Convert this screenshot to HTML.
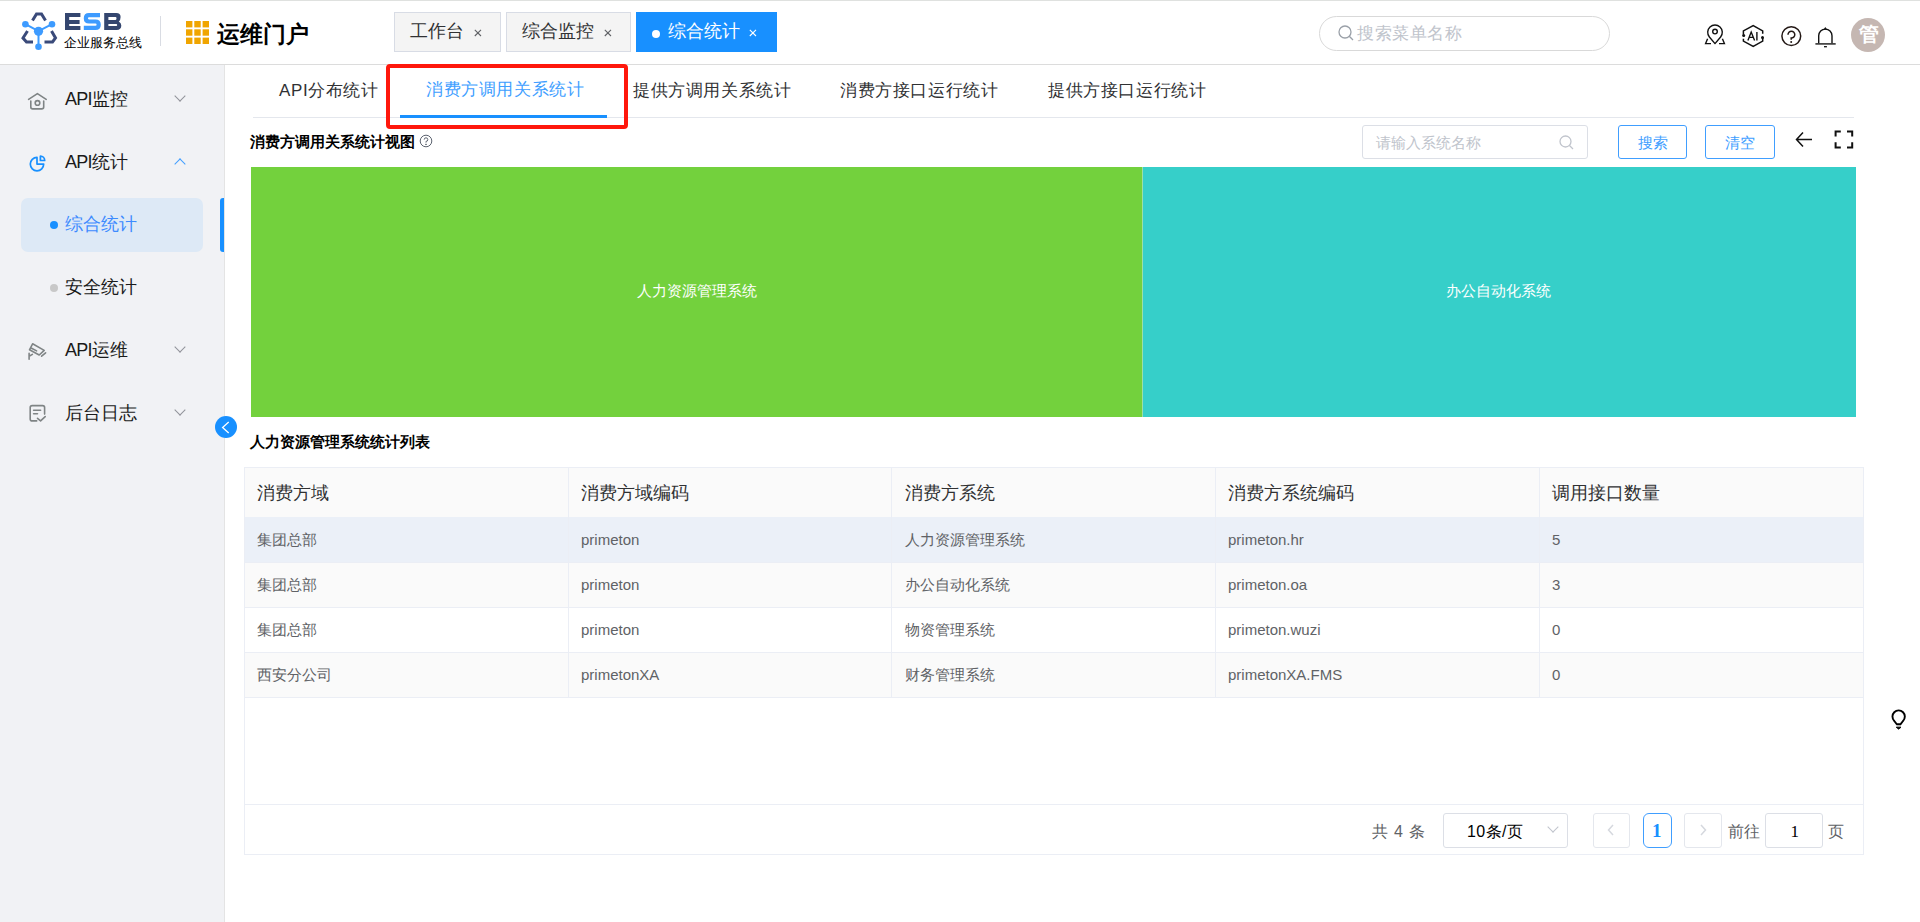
<!DOCTYPE html>
<html><head><meta charset="utf-8">
<style>
*{margin:0;padding:0;box-sizing:border-box}
html,body{width:1920px;height:922px;overflow:hidden;background:#fff;font-family:"Liberation Sans",sans-serif;color:#303133}
.a{position:absolute}
.t{position:absolute;white-space:nowrap;line-height:1}
#topline{left:0;top:0;width:1920px;height:1px;background:#dfe1df}
#hdr-b{left:0;top:64px;width:1920px;height:1px;background:#dcdcdc}
#side{left:0;top:65px;width:224px;height:857px;background:#f1f2f5}
#side-b{left:224px;top:65px;width:1px;height:857px;background:#e4e4e4}
.tab{position:absolute;top:12px;height:40px;background:#f4f4f4;border:1px solid #d8dce5;font-size:18px;color:#303133}
.tabx{position:absolute;font-size:12px;color:#606266}
.menu{font-size:18px;color:#1a1a1a}
.chev{position:absolute;width:8px;height:8px;border-right:1px solid #909399;border-bottom:1px solid #909399}
.ctab{font-size:17px;letter-spacing:0.6px;color:#303133}
.th{position:absolute;font-size:18px;color:#303133;line-height:1}
.td{position:absolute;font-size:15px;color:#606266;line-height:1}
</style></head>
<body>
<div id="topline" class="a"></div>
<div id="hdr-b" class="a"></div>
<div id="side" class="a"></div>
<div id="side-b" class="a"></div>

<!-- logo -->
<svg class="a" style="left:0;top:0" width="60" height="60" viewBox="0 0 60 60">
  <path d="M32.5 20.5 L36.5 14 L41.5 14 L45.5 20.5" fill="none" stroke="#3a4a7a" stroke-width="3"/>
  <path d="M27.5 31 L23 38 L26.5 42 L33 42" fill="none" stroke="#3a4a7a" stroke-width="3"/>
  <path d="M51.5 31 L55.5 38 L52.5 42 L44.5 42" fill="none" stroke="#3a4a7a" stroke-width="3"/>
  <path d="M25.4 24.2 L38.5 31.2 L52 24.2 M38.5 31.2 L38.5 46.5" fill="none" stroke="#3d9bff" stroke-width="2"/>
  <circle cx="38.5" cy="31.3" r="4.6" fill="#3d9bff"/>
  <circle cx="25.4" cy="24.2" r="3.3" fill="#3d9bff"/>
  <circle cx="52" cy="24.2" r="3.3" fill="#3d9bff"/>
  <circle cx="38.5" cy="46.7" r="3.3" fill="#3d9bff"/>
</svg>
<svg class="a" style="left:0;top:0" width="130" height="34" viewBox="0 0 130 34">
  <path fill="#34466f" d="M65 13 H80.4 V17.1 H69.2 V20 H79.6 V24 H69.2 V25.9 H80.4 V30 H65 Z"/>
  <path fill="none" stroke="#3d9bff" stroke-width="4.2" d="M100 15.1 L89 15.1 Q85.85 15.1 85.85 18.3 Q85.85 21.5 89 21.5 L95.5 21.5 Q98.7 21.5 98.7 24.7 Q98.7 27.9 95.5 27.9 L83.8 27.9"/>
  <path fill="#34466f" fill-rule="evenodd" d="M104.2 13 H116.3 Q120.6 13 120.6 17 Q120.6 20.2 118.8 21.4 Q121.3 22.6 121.3 25.6 Q121.3 30 116.6 30 H104.2 Z M108.4 17.1 V20 H115.6 Q116.5 20 116.5 18.55 Q116.5 17.1 115.6 17.1 Z M108.4 24 V25.9 H116.3 Q117.2 25.9 117.2 24.95 Q117.2 24 116.3 24 Z"/>
</svg>
<div class="t" style="left:64px;top:35.5px;font-size:13px;color:#000;letter-spacing:0px">企业服务总线</div>
<div class="a" style="left:160px;top:16px;width:1px;height:30px;background:#d9dce3"></div>
<!-- grid icon -->
<svg class="a" style="left:186px;top:21px" width="23" height="23" viewBox="0 0 23 23" fill="#f0a500">
  <rect x="0" y="0" width="6.4" height="6.4"/><rect x="8.3" y="0" width="6.4" height="6.4"/><rect x="16.6" y="0" width="6.4" height="6.4"/>
  <rect x="0" y="8.3" width="6.4" height="6.4"/><rect x="8.3" y="8.3" width="6.4" height="6.4"/><rect x="16.6" y="8.3" width="6.4" height="6.4"/>
  <rect x="0" y="16.6" width="6.4" height="6.4"/><rect x="8.3" y="16.6" width="6.4" height="6.4"/><rect x="16.6" y="16.6" width="6.4" height="6.4"/>
</svg>
<div class="t" style="left:217px;top:23px;font-size:23px;font-weight:bold;color:#000">运维门户</div>

<!-- header tabs -->
<div class="tab" style="left:394px;width:107px"><span class="t" style="left:15px;top:9px">工作台</span><svg class="a" style="left:79px;top:16px" width="8" height="8" viewBox="0 0 8 8" stroke="#606266" stroke-width="1.1"><path d="M0.8 0.8 L7 7 M7 0.8 L0.8 7"/></svg></div>
<div class="tab" style="left:506px;width:125px"><span class="t" style="left:15px;top:9px">综合监控</span><svg class="a" style="left:97px;top:16px" width="8" height="8" viewBox="0 0 8 8" stroke="#606266" stroke-width="1.1"><path d="M0.8 0.8 L7 7 M7 0.8 L0.8 7"/></svg></div>
<div class="tab" style="left:636px;width:141px;background:#1890ff;border-color:#1890ff;color:#fff"><span class="a" style="left:15px;top:17px;width:8px;height:8px;border-radius:50%;background:#fff"></span><span class="t" style="left:31px;top:9px">综合统计</span><svg class="a" style="left:112px;top:16px" width="8" height="8" viewBox="0 0 8 8" stroke="#fff" stroke-width="1.1"><path d="M0.8 0.8 L7 7 M7 0.8 L0.8 7"/></svg></div>

<!-- search -->
<div class="a" style="left:1319px;top:16px;width:291px;height:35px;border:1px solid #d9d9d9;border-radius:18px"></div>
<svg class="a" style="left:1338px;top:25px" width="16" height="16" viewBox="0 0 16 16"><circle cx="7" cy="7" r="6" fill="none" stroke="#9aa0a8" stroke-width="1.3"/><path d="M11.3 11.3 L15 15" stroke="#9aa0a8" stroke-width="1.3"/></svg>
<div class="t" style="left:1357px;top:25px;font-size:17px;letter-spacing:0.6px;color:#c0c4cc">搜索菜单名称</div>

<!-- header icons -->
<svg class="a" style="left:1700px;top:20px" width="30" height="30" viewBox="0 0 30 30" fill="none" stroke="#111" stroke-width="1.4">
  <path d="M15 23.6 L9.39 16.97 A7.3 7.3 0 1 1 20.61 16.97 Z" stroke-linejoin="round"/>
  <circle cx="15" cy="11.6" r="2.3"/>
  <path d="M7.6 18.8 L5.6 23.6 L11 23.6 M22.4 18.8 L24.4 23.6 L19 23.6"/>
</svg>
<svg class="a" style="left:1740px;top:22px" width="30" height="30" viewBox="0 0 30 30" fill="none" stroke="#111" stroke-width="1.5">
  <path d="M3.4 12.8 L3.4 8.9 L13.2 3.5 L22.7 8.9 L22.7 11.8"/>
  <path d="M3.4 16.8 L3.4 19.1 L13.2 24.3 L22.7 19.1 L22.7 15.8"/>
  <circle cx="3.7" cy="13.4" r="1.5" fill="#111" stroke="none"/>
  <circle cx="22.5" cy="15.6" r="1.5" fill="#111" stroke="none"/>
  <path d="M7.9 18.6 L11.2 10.1 L14.6 18.6 M9.3 15.4 L13.2 15.4 M16.9 10.1 L16.9 18.6" stroke-width="1.4"/>
</svg>
<svg class="a" style="left:1776px;top:21px" width="30" height="30" viewBox="0 0 30 30" fill="none" stroke="#231815" stroke-width="1.5">
  <circle cx="15.3" cy="15.1" r="9.4"/>
  <path d="M12 13.7 A3.4 3.4 0 1 1 15.2 17 L15.2 18.8"/>
  <circle cx="15.2" cy="21" r="1" fill="#231815" stroke="none"/>
</svg>
<svg class="a" style="left:1810px;top:21px" width="30" height="30" viewBox="0 0 30 30" fill="none" stroke="#111" stroke-width="1.4">
  <path d="M8.7 22.6 L8.7 14.75 A6.65 6.65 0 0 1 22 14.75 L22 22.6"/>
  <path d="M5.4 22.9 L25.7 22.9" stroke="#333" stroke-width="1.6"/>
  <path d="M14.2 8.3 L15.35 6.4 L16.5 8.3 Z" fill="#111" stroke-width="0.6"/>
  <path d="M14 25.7 L16.9 25.7" stroke-width="1.3"/>
</svg>
<div class="a" style="left:1851px;top:18px;width:34px;height:34px;border-radius:50%;background:#c5b7b2"></div>
<div class="t" style="left:1858.5px;top:24px;font-size:20px;font-weight:bold;color:#fff">管</div>

<!-- sidebar menu -->
<svg class="a" style="left:24px;top:88px" width="28" height="26" viewBox="0 0 28 26" fill="none" stroke="#7f8485" stroke-width="1.6" stroke-linecap="round" stroke-linejoin="round">
  <path d="M4.6 11.4 L13.4 5.6 L22.2 11.4"/><path d="M6.8 13 L6.8 19 Q6.8 20.9 8.7 20.9 L17.8 20.9 Q19.7 20.9 19.7 19 L19.7 13"/><circle cx="13.5" cy="14.9" r="2.3"/>
</svg>
<div class="t menu" style="left:65px;top:90px"><span style="letter-spacing:-0.7px">API</span>监控</div>
<div class="chev" style="left:176px;top:92px;transform:rotate(45deg)"></div>

<svg class="a" style="left:24px;top:150px" width="28" height="26" viewBox="0 0 28 26" fill="none" stroke="#1890ff" stroke-width="1.7" stroke-linejoin="round">
  <path d="M13 7.4 L13 14.1 L19.7 14.1 A6.7 6.7 0 1 1 13 7.4 Z"/><path d="M16.4 10.5 L16.4 6.2 A4.3 4.3 0 0 1 20.7 10.5 Z"/>
</svg>
<div class="t menu" style="left:65px;top:153px"><span style="letter-spacing:-0.7px">API</span>统计</div>
<div class="chev" style="left:176px;top:160px;transform:rotate(-135deg);border-color:#409eff"></div>

<div class="a" style="left:21px;top:198px;width:182px;height:54px;border-radius:7px;background:#dde9f6"></div>
<div class="a" style="left:50px;top:221px;width:8px;height:8px;border-radius:50%;background:#1890ff"></div>
<div class="t menu" style="left:65px;top:215px;color:#3d8bff">综合统计</div>
<div class="a" style="left:220px;top:198px;width:4px;height:54px;border-radius:3px 0 0 3px;background:#1890ff"></div>

<div class="a" style="left:50px;top:284px;width:8px;height:8px;border-radius:50%;background:#c8c8c8"></div>
<div class="t menu" style="left:65px;top:278px">安全统计</div>

<svg class="a" style="left:24px;top:338px" width="28" height="26" viewBox="0 0 28 26" fill="none" stroke="#7f8485" stroke-width="1.6" stroke-linejoin="round" stroke-linecap="round">
  <path d="M8.6 5.8 L20.2 12.4 L15.2 17 L5.5 11.8 Z"/><path d="M7.6 10.2 L12.6 12.9"/><path d="M17.6 18.2 L21.6 14.8"/><path d="M5.1 15.3 L5.1 21.3 M5.1 18.3 L8.4 16.4"/>
</svg>
<div class="t menu" style="left:65px;top:341px"><span style="letter-spacing:-0.7px">API</span>运维</div>
<div class="chev" style="left:176px;top:343px;transform:rotate(45deg)"></div>

<svg class="a" style="left:24px;top:400px" width="28" height="26" viewBox="0 0 28 26" fill="none" stroke="#7f8485" stroke-width="1.6" stroke-linejoin="round" stroke-linecap="round">
  <path d="M12.7 20.9 L8.2 20.9 Q6.2 20.9 6.2 18.9 L6.2 7.6 Q6.2 5.6 8.2 5.6 L18.6 5.6 Q20.6 5.6 20.6 7.6 L20.6 14.1"/><path d="M9.6 10.2 L16.6 10.2 M9.6 13.8 L13.5 13.8"/><path d="M13.5 18.3 L16.6 20.9 L21.2 16.6"/>
</svg>
<div class="t menu" style="left:65px;top:404px">后台日志</div>
<div class="chev" style="left:176px;top:406px;transform:rotate(45deg)"></div>

<div class="a" style="left:214.8px;top:415.6px;width:22.6px;height:22.6px;border-radius:50%;background:#1890ff"></div>
<svg class="a" style="left:215px;top:416px" width="23" height="23" viewBox="0 0 23 23" fill="none" stroke="#fff" stroke-width="1.3"><path d="M13.7 6.1 L7.6 11.4 L13.7 16.9"/></svg>

<!-- content tabs -->
<div class="t ctab" style="left:279px;top:82px">API分布统计</div>
<div class="t ctab" style="left:426px;top:81px;color:#409eff">消费方调用关系统计</div>
<div class="t ctab" style="left:633px;top:82px">提供方调用关系统计</div>
<div class="t ctab" style="left:840px;top:82px">消费方接口运行统计</div>
<div class="t ctab" style="left:1048px;top:82px">提供方接口运行统计</div>
<div class="a" style="left:253px;top:117px;width:1601px;height:1px;background:#e4e7ed"></div>
<div class="a" style="left:400px;top:115px;width:207px;height:3px;background:#1890ff"></div>
<div class="a" style="left:386px;top:64px;width:242px;height:65px;border:4px solid #ff170c;border-radius:4px"></div>

<div class="t" style="left:250px;top:134px;font-size:15px;font-weight:bold;color:#000">消费方调用关系统计视图</div>
<svg class="a" style="left:419px;top:133.5px" width="14" height="14" viewBox="0 0 14 14" fill="none" stroke="#5c6370" stroke-width="1"><circle cx="7" cy="7" r="5.8"/><path d="M5.2 5.6 A1.8 1.8 0 1 1 7 7.4 L7 8.6"/><circle cx="7" cy="10.3" r="0.4" fill="#606266"/></svg>

<!-- filter -->
<div class="a" style="left:1362px;top:125px;width:226px;height:34px;border:1px solid #dcdfe6;border-radius:3px"></div>
<div class="t" style="left:1376px;top:135px;font-size:15px;color:#c0c4cc">请输入系统名称</div>
<svg class="a" style="left:1559px;top:135px" width="15" height="15" viewBox="0 0 15 15" fill="none" stroke="#c0c4cc" stroke-width="1.3"><circle cx="6.5" cy="6.5" r="5.5"/><path d="M10.5 10.5 L14 14"/></svg>
<div class="a" style="left:1618px;top:125px;width:69px;height:34px;border:1px solid #409eff;border-radius:3px"></div>
<div class="t" style="left:1638px;top:135px;font-size:15px;color:#409eff">搜索</div>
<div class="a" style="left:1705px;top:125px;width:70px;height:34px;border:1px solid #409eff;border-radius:3px"></div>
<div class="t" style="left:1725px;top:135px;font-size:15px;color:#409eff">清空</div>
<svg class="a" style="left:1794px;top:130px" width="20" height="20" viewBox="0 0 20 20" fill="none" stroke="#111" stroke-width="1.5"><path d="M9 2.5 L2.5 9.5 L9 16.5 M2.5 9.5 L18 9.5"/></svg>
<svg class="a" style="left:1834px;top:130px" width="20" height="20" viewBox="0 0 20 20" fill="none" stroke="#111" stroke-width="2"><path d="M1.6 6.6 L1.6 1.6 L6.8 1.6 M13 1.6 L18.2 1.6 L18.2 6.6 M18.2 12.2 L18.2 17.4 L13 17.4 M6.8 17.4 L1.6 17.4 L1.6 12.2"/></svg>

<!-- treemap -->
<div class="a" style="left:251px;top:167px;width:891px;height:250px;background:#73d13d"></div><div class="a" style="left:1142px;top:167px;width:1px;height:250px;background:#9be0a6"></div>
<div class="a" style="left:1143px;top:167px;width:713px;height:250px;background:#36cfc9"></div>
<div class="t" style="left:637px;top:283px;font-size:15px;color:#fff">人力资源管理系统</div>
<div class="t" style="left:1446px;top:283px;font-size:15px;color:#fff">办公自动化系统</div>

<div class="t" style="left:250px;top:434px;font-size:15px;font-weight:bold;color:#000">人力资源管理系统统计列表</div>

<!-- table -->
<div class="a" style="left:244px;top:467px;width:1620px;height:388px;border:1px solid #ebeef5"></div>
<div class="a" style="left:245px;top:468px;width:1618px;height:49px;background:#fafafa"></div>
<div class="a" style="left:245px;top:517px;width:1618px;height:45px;background:#ebf0f8"></div>
<div class="a" style="left:245px;top:562px;width:1618px;height:45px;background:#fafafa"></div>
<div class="a" style="left:245px;top:652px;width:1618px;height:45px;background:#fafafa"></div>
<div class="a" style="left:245px;top:562px;width:1618px;height:1px;background:#ebeef5"></div>
<div class="a" style="left:245px;top:607px;width:1618px;height:1px;background:#ebeef5"></div>
<div class="a" style="left:245px;top:652px;width:1618px;height:1px;background:#ebeef5"></div>
<div class="a" style="left:245px;top:697px;width:1618px;height:1px;background:#ebeef5"></div>
<div class="a" style="left:245px;top:804px;width:1618px;height:1px;background:#ebeef5"></div>
<div class="a" style="left:568px;top:468px;width:1px;height:229px;background:#ebeef5"></div>
<div class="a" style="left:891px;top:468px;width:1px;height:229px;background:#ebeef5"></div>
<div class="a" style="left:1215px;top:468px;width:1px;height:229px;background:#ebeef5"></div>
<div class="a" style="left:1539px;top:468px;width:1px;height:229px;background:#ebeef5"></div>

<div class="th" style="left:257px;top:484px">消费方域</div>
<div class="th" style="left:581px;top:484px">消费方域编码</div>
<div class="th" style="left:905px;top:484px">消费方系统</div>
<div class="th" style="left:1228px;top:484px">消费方系统编码</div>
<div class="th" style="left:1552px;top:484px">调用接口数量</div>

<div class="td" style="left:257px;top:532px">集团总部</div>
<div class="td" style="left:581px;top:532px">primeton</div>
<div class="td" style="left:905px;top:532px">人力资源管理系统</div>
<div class="td" style="left:1228px;top:532px">primeton.hr</div>
<div class="td" style="left:1552px;top:532px">5</div>

<div class="td" style="left:257px;top:577px">集团总部</div>
<div class="td" style="left:581px;top:577px">primeton</div>
<div class="td" style="left:905px;top:577px">办公自动化系统</div>
<div class="td" style="left:1228px;top:577px">primeton.oa</div>
<div class="td" style="left:1552px;top:577px">3</div>

<div class="td" style="left:257px;top:622px">集团总部</div>
<div class="td" style="left:581px;top:622px">primeton</div>
<div class="td" style="left:905px;top:622px">物资管理系统</div>
<div class="td" style="left:1228px;top:622px">primeton.wuzi</div>
<div class="td" style="left:1552px;top:622px">0</div>

<div class="td" style="left:257px;top:667px">西安分公司</div>
<div class="td" style="left:581px;top:667px">primetonXA</div>
<div class="td" style="left:905px;top:667px">财务管理系统</div>
<div class="td" style="left:1228px;top:667px">primetonXA.FMS</div>
<div class="td" style="left:1552px;top:667px">0</div>

<!-- pagination -->
<div class="t" style="left:1372px;top:824px;font-size:16px;color:#606266;word-spacing:1.5px">共 4 条</div>
<div class="a" style="left:1443px;top:813px;width:125px;height:35px;border:1px solid #dcdfe6;border-radius:3px"></div>
<div class="t" style="left:1467px;top:824px;font-size:16px;color:#000;letter-spacing:0.4px">10条/页</div>
<div class="chev" style="left:1549px;top:823px;transform:rotate(45deg);border-color:#c0c4cc"></div>
<div class="a" style="left:1593px;top:813px;width:37px;height:35px;border:1px solid #e4e7ed;border-radius:3px"></div>
<svg class="a" style="left:1604px;top:823px" width="14" height="14" viewBox="0 0 14 14" fill="none" stroke="#d5d8de" stroke-width="1.5"><path d="M9 2 L4.5 7 L9 12"/></svg>
<div class="a" style="left:1643px;top:813px;width:29px;height:35px;border:1px solid #409eff;border-radius:6px"></div>
<div class="t" style="left:1652px;top:821px;font-size:19px;font-weight:bold;color:#1890ff;font-family:'Liberation Serif',serif">1</div>
<div class="a" style="left:1684px;top:813px;width:38px;height:35px;border:1px solid #e4e7ed;border-radius:3px"></div>
<svg class="a" style="left:1696px;top:823px" width="14" height="14" viewBox="0 0 14 14" fill="none" stroke="#d5d8de" stroke-width="1.5"><path d="M5 2 L9.5 7 L5 12"/></svg>
<div class="t" style="left:1728px;top:824px;font-size:16px;color:#606266">前往</div>
<div class="a" style="left:1765px;top:813px;width:58px;height:35px;border:1px solid #dcdfe6;border-radius:3px"></div>
<div class="t" style="left:1790.5px;top:823px;font-size:17px;color:#000;font-family:'Liberation Serif',serif">1</div>
<div class="t" style="left:1828px;top:824px;font-size:16px;color:#606266">页</div>

<!-- bulb -->
<svg class="a" style="left:1889px;top:708px" width="19" height="23" viewBox="0 0 19 23" fill="none" stroke="#000" stroke-width="1.9" stroke-linejoin="round">
  <path d="M7.8 16.3 L5.3 13 A6.2 6.2 0 1 1 14 13 L11.4 16.3 Z"/>
  <path d="M7.4 18.1 L11.9 18.1" stroke="#999" stroke-width="1"/>
  <path d="M7.2 19.3 L12 19.3 L9.6 21.2 Z" fill="#000" stroke-width="0.8"/>
</svg>
</body></html>
